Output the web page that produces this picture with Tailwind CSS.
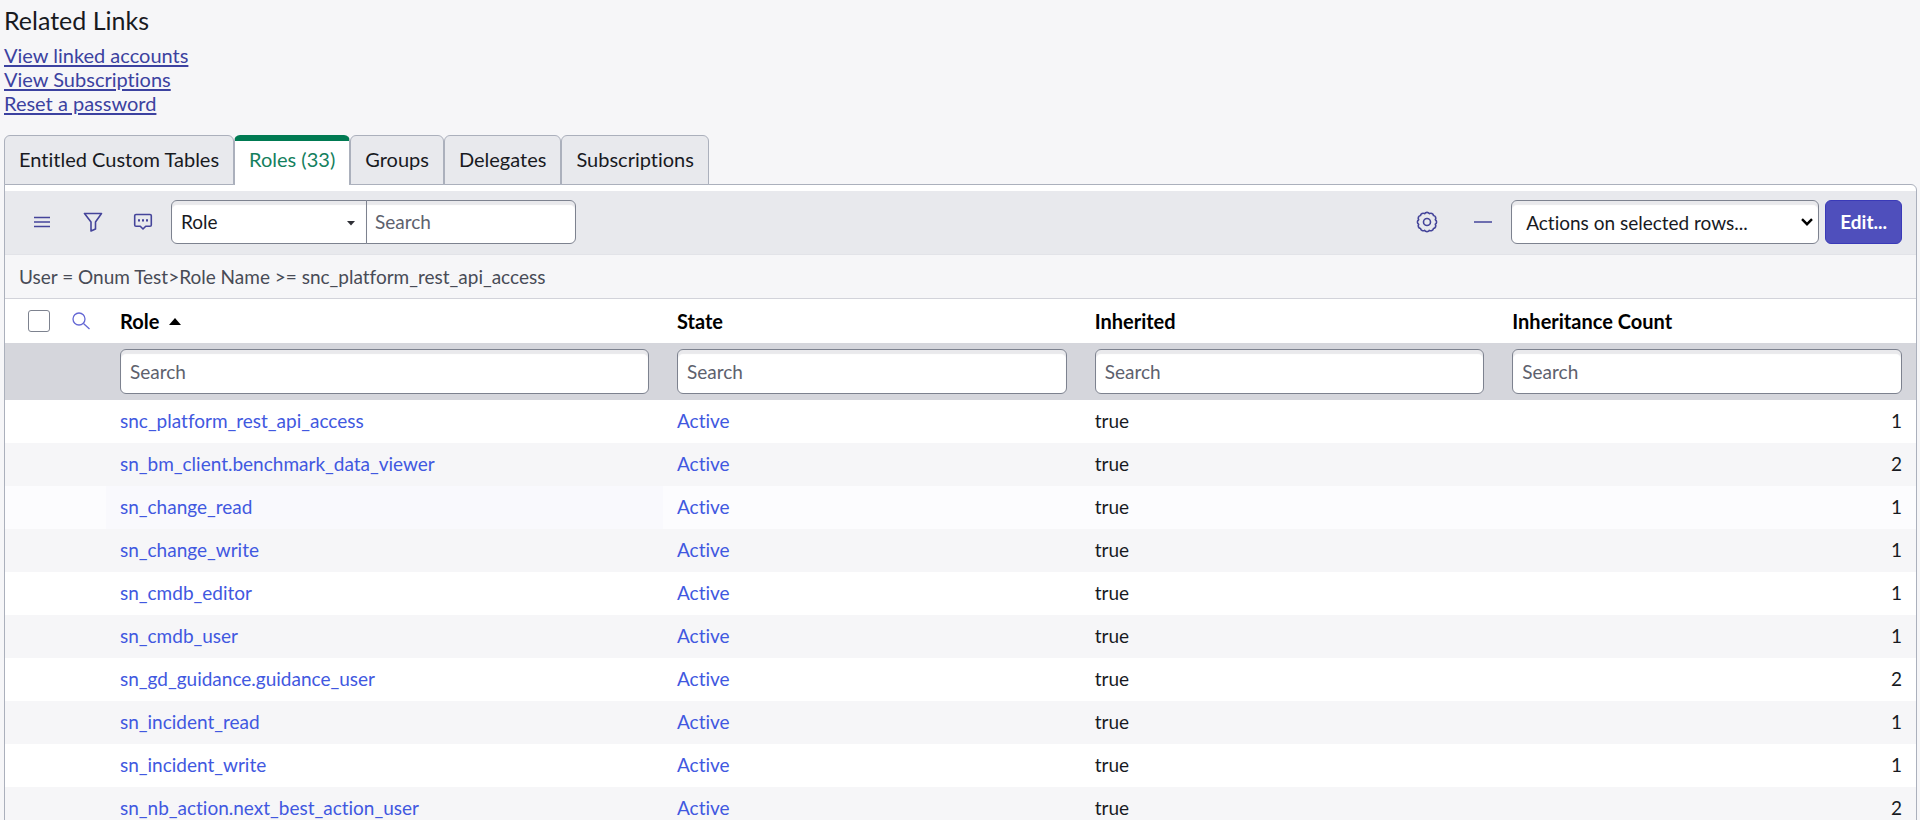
<!DOCTYPE html>
<html lang="en">
<head>
<meta charset="utf-8">
<title>Roles</title>
<script src="https://cdn.jsdelivr.net/npm/@tailwindcss/browser@4"></script>
</head>
<body class="h-screen overflow-hidden bg-[#f6f6f8] font-[Lato,sans-serif] text-[19px] leading-6 text-[#181a1f] [font-variant-ligatures:none]">
<main class="pl-1 pr-[3px]">
  <section>
    <h2 class="pt-1 text-[25px] leading-8">Related Links</h2>
    <ul class="pt-[7px] text-[20px] leading-6 text-[#3c42a0]">
      <li><a href="#" class="underline underline-offset-2">View linked accounts</a></li>
      <li><a href="#" class="underline underline-offset-2">View Subscriptions</a></li>
      <li><a href="#" class="underline underline-offset-2">Reset a password</a></li>
    </ul>
  </section>

  <div role="tablist" class="relative -mb-px mt-5 flex h-[50px] text-[20px]">
    <button role="tab" class="rounded-t-md border border-[#abb0bc] bg-[#e8e9ed] px-3.5 pb-0.5">Entitled Custom Tables</button>
    <button role="tab" aria-selected="true" class="rounded-t-md border-x border-t-6 border-x-[#abb0bc] border-t-[#007a52] bg-white px-3.5 pb-2 text-[#14805e]">Roles (33)</button>
    <button role="tab" class="rounded-t-md border border-[#abb0bc] bg-[#e8e9ed] px-3.5 pb-0.5">Groups</button>
    <button role="tab" class="rounded-t-md border border-[#abb0bc] bg-[#e8e9ed] px-3.5 pb-0.5">Delegates</button>
    <button role="tab" class="rounded-t-md border border-[#abb0bc] bg-[#e8e9ed] px-3.5 pb-0.5">Subscriptions</button>
  </div>

  <section class="overflow-hidden rounded-tr-md border border-[#abb0bc] bg-white pt-1.5">
    <div class="flex h-16 items-center border-b border-[#e2e3e8] bg-[#e8e9ed] pb-0.5 pl-6 pr-3.5 text-[#44449a]">
      <button aria-label="List menu" class="mr-[25px] grid size-[26px] place-items-center">
        <svg class="size-5" viewBox="0 0 20 20" fill="none" stroke="currentColor" stroke-width="1.500"><path d="M2 5.500h16M2 10h16M2 14.500h16"/></svg>
      </button>
      <button aria-label="Filter" class="mr-6 grid size-[26px] place-items-center">
        <svg class="size-5" viewBox="0 0 20 20" fill="none" stroke="currentColor" stroke-width="1.600" stroke-linejoin="round"><path d="M1.500 1.500h17L12.500 10v7L8 19v-9z"/></svg>
      </button>
      <button aria-label="Activity stream" class="mr-[15px] grid size-[26px] place-items-center">
        <svg class="size-5" viewBox="0 0 20 20" fill="none" stroke="currentColor" stroke-width="1.600" stroke-linejoin="round"><path d="M3 2.500h14Q18.300 2.500 18.300 3.800V13Q18.300 14.300 17 14.300h-4.300L10 17l-2.700-2.700H3Q1.700 14.300 1.700 13V3.800Q1.700 2.500 3 2.500z"/><path d="M5 8.400h2M9 8.400h2M13 8.400h2" stroke-width="2.200"/></svg>
      </button>
      <div class="relative">
        <select aria-label="Search field" class="block h-11 w-[196px] appearance-none rounded-l-md border border-[#7d828f] bg-white pl-[9px] text-[#181a1f] shadow-[inset_0_4px_1px_#e9e9ec]"><option>Role</option></select>
        <svg class="pointer-events-none absolute right-3 top-5 h-1.5 w-2" viewBox="0 0 8 6" fill="#2f3036"><path d="M0 1h8L4 5.500z"/></svg>
      </div>
      <input type="search" aria-label="Search" placeholder="Search" class="-ml-px h-11 w-[210px] rounded-r-md border border-[#7d828f] bg-white px-2 shadow-[inset_0_4px_1px_#e9e9ec] placeholder:text-[#5d616d]">
      <button aria-label="Personalize list" class="ml-auto mr-[35px] grid size-[22px] place-items-center">
        <svg class="size-[22px]" viewBox="0 0 22 22" fill="none" stroke="currentColor" stroke-width="1.600" stroke-linejoin="round"><path d="M8.700 2.700a2.700 2.700 0 0 1 4.600 0 2.700 2.700 0 0 1 4.200 1.800 2.700 2.700 0 0 1 1.800 4.200 2.700 2.700 0 0 1 0 4.600 2.700 2.700 0 0 1-1.800 4.200 2.700 2.700 0 0 1-4.200 1.800 2.700 2.700 0 0 1-4.600 0 2.700 2.700 0 0 1-4.200-1.800 2.700 2.700 0 0 1-1.800-4.200 2.700 2.700 0 0 1 0-4.600 2.700 2.700 0 0 1 1.800-4.200 2.700 2.700 0 0 1 4.200-1.800z"/><circle cx="11" cy="11" r="3.500"/></svg>
      </button>
      <button aria-label="Collapse list" class="mr-[18px] grid size-5 place-items-center">
        <svg class="size-5" viewBox="0 0 20 20" stroke="currentColor" stroke-width="1.600"><path d="M1 10h18"/></svg>
      </button>
      <div class="relative mr-1.5">
        <select aria-label="Actions on selected rows" class="block h-11 w-[308px] appearance-none rounded-md border border-[#7d828f] bg-white pl-3.5 pt-0.5 text-[#181a1f] shadow-[inset_0_4px_1px_#e9e9ec]"><option>Actions on selected rows...</option></select>
        <svg class="pointer-events-none absolute right-1.5 top-[18px] h-2 w-3" viewBox="0 0 12 8" fill="none" stroke="#000" stroke-width="2.400"><path d="M1 1.200l5 5 5-5"/></svg>
      </div>
      <button class="h-11 rounded-md border border-[#3a3ab8] bg-[#4f4fbc] px-3.5 font-bold text-white">Edit...</button>
    </div>

    <p class="flex h-11 items-center border-b border-[#d2d3da] bg-[#f6f6f8] px-3.5 text-[#484b56]">User = Onum Test&gt;Role Name &gt;= snc_platform_rest_api_access</p>

    <table class="w-full table-fixed border-collapse">
      <colgroup><col class="w-[101px]"><col class="w-[557px]"><col><col><col></colgroup>
      <thead>
        <tr class="h-11 text-left text-[20px] text-black">
          <td class="pl-[23px]">
            <div class="flex items-center gap-[22px]">
              <input type="checkbox" aria-label="Select all" class="size-[22px] appearance-none rounded-[3px] border border-[#7d828f] bg-white">
              <button aria-label="Search rows"><svg class="block size-[18px]" viewBox="0 0 18 18" fill="none" stroke="#6467d4" stroke-width="1.300"><circle cx="7" cy="7" r="6"/><path d="M11.500 11.500l6 5.500"/></svg></button>
            </div>
          </td>
          <th class="px-3.5 font-bold"><span class="flex items-center gap-2.5">Role <svg class="h-[7px] w-3" viewBox="0 0 12 7"><path d="M0 7l6-7 6 7z"/></svg></span></th>
          <th class="px-3.5 font-bold">State</th>
          <th class="px-3.5 font-bold">Inherited</th>
          <th class="px-3.5 font-bold">Inheritance Count</th>
        </tr>
        <tr class="h-[57px] bg-[#d5d6dc]">
          <td></td>
          <td class="px-3.5"><input type="search" aria-label="Search role" placeholder="Search" class="block h-[45px] w-full rounded-md border border-[#7d828f] bg-white px-[9px] shadow-[inset_0_4px_1px_#e9e9ec] placeholder:text-[#5d616d]"></td>
          <td class="px-3.5"><input type="search" aria-label="Search state" placeholder="Search" class="block h-[45px] w-full rounded-md border border-[#7d828f] bg-white px-[9px] shadow-[inset_0_4px_1px_#e9e9ec] placeholder:text-[#5d616d]"></td>
          <td class="px-3.5"><input type="search" aria-label="Search inherited" placeholder="Search" class="block h-[45px] w-full rounded-md border border-[#7d828f] bg-white px-[9px] shadow-[inset_0_4px_1px_#e9e9ec] placeholder:text-[#5d616d]"></td>
          <td class="px-3.5"><input type="search" aria-label="Search inheritance count" placeholder="Search" class="block h-[45px] w-full rounded-md border border-[#7d828f] bg-white px-[9px] shadow-[inset_0_4px_1px_#e9e9ec] placeholder:text-[#5d616d]"></td>
        </tr>
      </thead>
      <tbody class="[&_td]:pb-0.5">
        <tr class="h-[43px] even:bg-[#f6f6f8]"><td></td><td class="px-3.5"><a href="#" class="text-[#4158e0]">snc_platform_rest_api_access</a></td><td class="px-3.5"><a href="#" class="text-[#4158e0]">Active</a></td><td class="px-3.5">true</td><td class="px-3.5 text-right">1</td></tr>
        <tr class="h-[43px] even:bg-[#f6f6f8]"><td></td><td class="px-3.5"><a href="#" class="text-[#4158e0]">sn_bm_client.benchmark_data_viewer</a></td><td class="px-3.5"><a href="#" class="text-[#4158e0]">Active</a></td><td class="px-3.5">true</td><td class="px-3.5 text-right">2</td></tr>
        <tr class="h-[43px] bg-[#fcfcfe]"><td></td><td class="bg-[#f9f9fd] px-3.5"><a href="#" class="text-[#4158e0]">sn_change_read</a></td><td class="px-3.5"><a href="#" class="text-[#4158e0]">Active</a></td><td class="px-3.5">true</td><td class="px-3.5 text-right">1</td></tr>
        <tr class="h-[43px] even:bg-[#f6f6f8]"><td></td><td class="px-3.5"><a href="#" class="text-[#4158e0]">sn_change_write</a></td><td class="px-3.5"><a href="#" class="text-[#4158e0]">Active</a></td><td class="px-3.5">true</td><td class="px-3.5 text-right">1</td></tr>
        <tr class="h-[43px] even:bg-[#f6f6f8]"><td></td><td class="px-3.5"><a href="#" class="text-[#4158e0]">sn_cmdb_editor</a></td><td class="px-3.5"><a href="#" class="text-[#4158e0]">Active</a></td><td class="px-3.5">true</td><td class="px-3.5 text-right">1</td></tr>
        <tr class="h-[43px] even:bg-[#f6f6f8]"><td></td><td class="px-3.5"><a href="#" class="text-[#4158e0]">sn_cmdb_user</a></td><td class="px-3.5"><a href="#" class="text-[#4158e0]">Active</a></td><td class="px-3.5">true</td><td class="px-3.5 text-right">1</td></tr>
        <tr class="h-[43px] even:bg-[#f6f6f8]"><td></td><td class="px-3.5"><a href="#" class="text-[#4158e0]">sn_gd_guidance.guidance_user</a></td><td class="px-3.5"><a href="#" class="text-[#4158e0]">Active</a></td><td class="px-3.5">true</td><td class="px-3.5 text-right">2</td></tr>
        <tr class="h-[43px] even:bg-[#f6f6f8]"><td></td><td class="px-3.5"><a href="#" class="text-[#4158e0]">sn_incident_read</a></td><td class="px-3.5"><a href="#" class="text-[#4158e0]">Active</a></td><td class="px-3.5">true</td><td class="px-3.5 text-right">1</td></tr>
        <tr class="h-[43px] even:bg-[#f6f6f8]"><td></td><td class="px-3.5"><a href="#" class="text-[#4158e0]">sn_incident_write</a></td><td class="px-3.5"><a href="#" class="text-[#4158e0]">Active</a></td><td class="px-3.5">true</td><td class="px-3.5 text-right">1</td></tr>
        <tr class="h-[43px] even:bg-[#f6f6f8]"><td></td><td class="px-3.5"><a href="#" class="text-[#4158e0]">sn_nb_action.next_best_action_user</a></td><td class="px-3.5"><a href="#" class="text-[#4158e0]">Active</a></td><td class="px-3.5">true</td><td class="px-3.5 text-right">2</td></tr>
      </tbody>
    </table>
  </section>
</main>
</body>
</html>
